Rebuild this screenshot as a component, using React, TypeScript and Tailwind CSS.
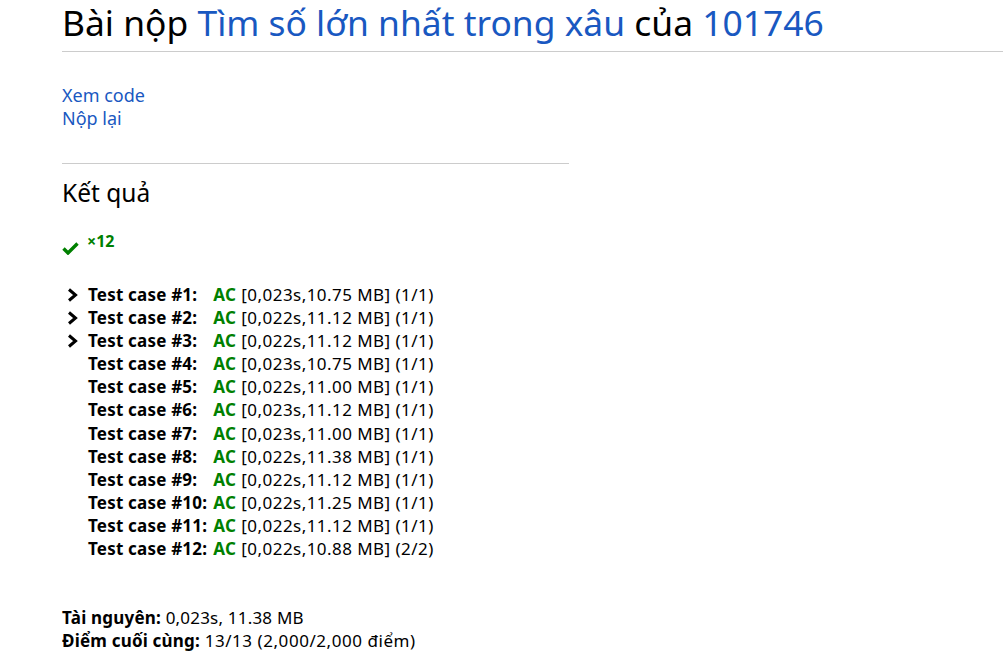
import React from "react";

const cases = [
  { n: 1, t: "0,023s", m: "10.75", p: "1/1", arrow: true },
  { n: 2, t: "0,022s", m: "11.12", p: "1/1", arrow: true },
  { n: 3, t: "0,022s", m: "11.12", p: "1/1", arrow: true },
  { n: 4, t: "0,023s", m: "10.75", p: "1/1" },
  { n: 5, t: "0,022s", m: "11.00", p: "1/1" },
  { n: 6, t: "0,023s", m: "11.12", p: "1/1" },
  { n: 7, t: "0,023s", m: "11.00", p: "1/1" },
  { n: 8, t: "0,022s", m: "11.38", p: "1/1" },
  { n: 9, t: "0,022s", m: "11.12", p: "1/1" },
  { n: 10, t: "0,022s", m: "11.25", p: "1/1" },
  { n: 11, t: "0,022s", m: "11.12", p: "1/1" },
  { n: 12, t: "0,022s", m: "10.88", p: "2/2" },
];

function Chevron() {
  return (
    <svg width="11" height="14" viewBox="0 0 11 14" className="block">
      <path d="M2 1.5 L8.5 7 L2 12.5" fill="none" stroke="#000" strokeWidth="3" strokeLinejoin="miter" />
    </svg>
  );
}

function Check() {
  return (
    <svg width="17" height="14" viewBox="0 0 17 14" className="block">
      <path d="M1.5 7.5 L6 12 L15.5 2.5" fill="none" stroke="#008000" strokeWidth="3.4" />
    </svg>
  );
}

export default function App() {
  return (
    <div className="min-h-[661px] bg-white pl-[62px] text-black" style={{ fontFamily: '"Noto Sans", "Open Sans", sans-serif' }}>
      <div className="border-b border-[#cccccc] pb-[6px]">
        <h2 className="text-[35.4px] leading-[45px] whitespace-nowrap">
          Bài nộp <a className="text-[#1958c1]">Tìm số lớn nhất trong xâu</a> của{" "}
          <a className="text-[#1958c1]">101746</a>
        </h2>
      </div>
      <div className="w-[507px]">
        <div className="pt-[32px] pb-[33px] border-b border-[#cccccc] text-[18px] leading-[23px] text-[#1958c1]">
          <div>Xem code</div>
          <div>Nộp lại</div>
        </div>
      </div>
      <h3 className="text-[24.5px] leading-[30px] mt-[14px]">Kết quả</h3>
      <div className="flex items-start mt-[25px] h-[20px]">
        <div className="mt-[8px]"><Check /></div>
        <span className="ml-[8px] text-[16px] font-bold leading-[16px] text-[#008000]">×12</span>
      </div>
      <table className="mt-[30px] text-[17px] leading-[23.1px] border-collapse">
        <tbody>
          {cases.map((c) => (
            <tr key={c.n}>
              <td className="w-[26px] p-0 align-middle pl-[5px]">{c.arrow ? <Chevron /> : null}</td>
              <td className="p-0 pr-[6px] font-bold whitespace-nowrap tracking-[0.2px]">Test case #{c.n}:</td>
              <td className="p-0 whitespace-nowrap tracking-[0.45px]">
                <span className="font-bold text-[#008000]">AC</span> [{c.t},{c.m} MB] ({c.p})
              </td>
            </tr>
          ))}
        </tbody>
      </table>
      <div className="mt-[46px] text-[17px] leading-[23px] tracking-[0.2px]">
        <div><b>Tài nguyên:</b> 0,023s, 11.38 MB</div>
        <div><b>Điểm cuối cùng:</b> <span className="tracking-[0.55px]">13/13 (2,000/2,000 điểm)</span></div>
      </div>
    </div>
  );
}
